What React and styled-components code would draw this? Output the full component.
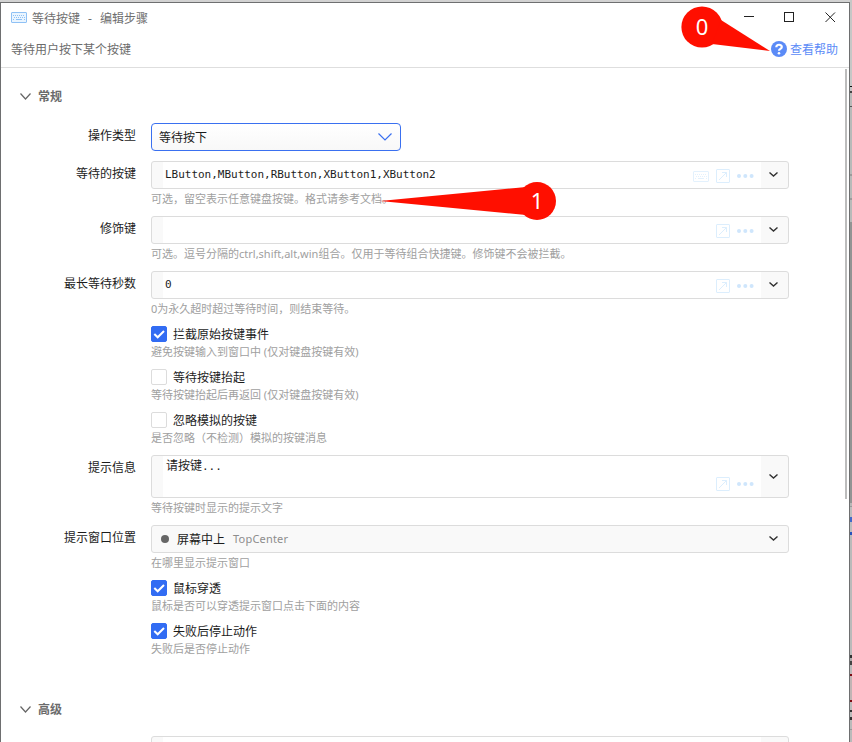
import styled, { createGlobalStyle } from "styled-components";

const GlobalStyle = createGlobalStyle`
  * {
    box-sizing: border-box;
  }

  body {
    margin: 0;
    overflow: hidden;
    background: #d2d2d2;
    color: #1c1c1c;
    font-family: "Noto Sans", "Noto Sans CJK SC", sans-serif;
    font-size: 12px;
  }
`;

const Desktop = styled.div`
  position: relative;
  display: flex;
  width: 852px;
  height: 742px;
  overflow: hidden;
`;

const Window = styled.div`
  display: flex;
  flex-direction: column;
  width: 850px;
  height: 740px;
  margin-top: 2px;
  border: 1px solid #6e6f70;
  border-bottom: 0;
  background: #fff;
`;

const Behind = styled.div`
  display: flex;
  flex-direction: column;
  width: 2px;
`;

const Slice = styled.div`
  flex: none;
  height: ${(p) => p.$h}px;
  background: ${(p) => p.$color};
`;

const TitleBar = styled.header`
  display: flex;
  align-items: center;
  height: 29px;
  padding: 0 13px 0 10px;
  color: #6f6f6f;
`;

const Title = styled.span`
  flex: 1;
  margin-left: 5px;
  white-space: pre;
  word-spacing: 0.9px;
`;

const WindowButtons = styled.div`
  display: flex;
  gap: 30px;

  svg {
    display: block;
  }
`;

const SubBar = styled.div`
  display: flex;
  align-items: center;
  justify-content: space-between;
  height: 36px;
  padding: 0 11px 2px 10px;
  border-bottom: 1px solid #dedede;
  color: #6b6b6b;
`;

const HelpLink = styled.a`
  display: flex;
  align-items: center;
  gap: 3px;
  color: #5b8bf7;
`;

const Content = styled.main`
  display: flex;
  flex: 1;
  min-height: 0;
`;

const Form = styled.div`
  flex: 1;
  overflow: hidden;
`;

const ScrollThumb = styled.div`
  width: 2px;
  height: 430px;
  margin: 1px 2px 0 0;
  background: #bcbcbc;
`;

const SectionTitle = styled.div`
  display: flex;
  align-items: center;
  gap: 7px;
  height: 20px;
  margin: ${(p) => p.$top}px 0 17px 19px;
  color: #6b6b6b;
  font-weight: 700;
`;

const Row = styled.div`
  display: grid;
  grid-template-columns: 135px 638px;
  column-gap: 15px;
  margin-bottom: ${(p) => p.$gap ?? 7}px;
`;

const Label = styled.label`
  height: 16px;
  line-height: 26px;
  text-align: right;
`;

const Hint = styled.div`
  height: 20px;
  color: #a0a0a0;
  font-size: 11px;
  line-height: 20px;
  white-space: nowrap;
`;

const Select = styled.div`
  display: flex;
  align-items: center;
  justify-content: space-between;
  width: 250px;
  height: 28px;
  padding: 0 8px 1px 7px;
  border: 1px solid #3a70f0;
  border-radius: 4px;
  background: linear-gradient(#fff, #f8f8f8);
`;

const Field = styled.div`
  display: flex;
  height: ${(p) => p.$h ?? 28}px;
  overflow: hidden;
  border: 1px solid #dcdcdc;
  border-radius: 3px;
  background: #f9f9f9;
`;

const FieldBody = styled.div`
  display: flex;
  flex: 1;
  justify-content: space-between;
  margin-left: 11px;
  padding-left: ${(p) => (p.$multi ? 3 : 2)}px;
  background: #fff;
`;

const Value = styled.span`
  font-family: "DejaVu Sans Mono", "Noto Sans CJK SC", monospace;
  font-size: 11px;
  letter-spacing: -0.02px;
  line-height: ${(p) => (p.$multi ? 20 : 25)}px;
`;

const Big = styled.span`
  font-size: 12px;
`;

const Tools = styled.div`
  display: flex;
  align-items: center;
  align-self: flex-end;
  gap: 7px;
  height: ${(p) => (p.$multi ? 26 : 24)}px;
  margin-right: 7px;
`;

const DropCell = styled.div`
  display: flex;
  align-items: center;
  justify-content: center;
  width: 27px;
  padding: 0 2px 1px 0;
`;

const Choice = styled.div`
  display: flex;
  flex: 1;
  align-items: center;
  padding-left: 9px;
`;

const Dot = styled.span`
  width: 8px;
  height: 8px;
  margin-right: 8px;
  border-radius: 50%;
  background: #666;
`;

const ChoiceNote = styled.span`
  margin: 0 0 1px 8px;
  color: #8d8d8d;
  font-size: 11px;
  letter-spacing: 0.2px;
`;

const CheckLine = styled.div`
  display: flex;
  align-items: center;
  gap: 6px;
  height: 16px;
`;

const CheckBox = styled.span`
  display: flex;
  width: 16px;
  height: 16px;
  border: 1px solid ${(p) => (p.$on ? "#326cf3" : "#dcdcdc")};
  border-radius: 2px;
  background: ${(p) => (p.$on ? "#326cf3" : "#fff")};
`;

const Markers = styled.svg`
  position: absolute;
  top: 0;
  left: 0;
  pointer-events: none;
`;

// what shows of the window behind, top to bottom
const slices = [
  [86, "#c6c7c6"], [1, "#111"], [4, "#c4c4c4"], [2, "#444"], [13, "#b9bab9"],
  [1, "#555"], [67, "#b8bab9"], [2, "#9b9b9b"], [22, "#b8bab9"], [2, "#9b9b9b"],
  [22, "#b8bab9"], [281, "#929493"], [3, "#b7b7b7"], [1, "#999"], [10, "#bdbdbd"],
  [5, "#4269c8"], [10, "#bdbdbd"], [3, "#2852bb"], [120, "#bababa"], [3, "#333"],
  [3, "#aaa"], [4, "#444"], [9, "#bababa"], [2, "#7c0b12"], [24, "#c0b4b4"],
  [2, "#7c0b12"], [8, "#bababa"], [2, "#333"], [5, "#bababa"], [3, "#333"],
  [9, "#bababa"], [1, "#999"], [12, "#bababa"],
];

const KeyboardIcon = ({ color, fill = "none" }) => (
  <svg width="16" height="11" viewBox="0 0 16 11" fill="none" stroke={color}>
    <rect x="0.5" y="0.5" width="15" height="10" rx="0.5" fill={fill} />
    <path d="M2 3.5h12M3 5.5h11" strokeDasharray="1 1" />
    <path d="M2 7.5h1M5 7.5h6M13 7.5h1" />
  </svg>
);

const OpenIcon = () => (
  <svg width="14" height="14" viewBox="0 0 14 14" fill="none" stroke="#dceefd">
    <rect x="0.5" y="0.5" width="13" height="13" rx="0.5" />
    <path d="M3 11L10.5 3.5M6 3.5h4.5V8" />
  </svg>
);

const MoreIcon = () => (
  <svg width="17" height="4" viewBox="0 0 17 4" fill="#cfe6fc">
    <circle cx="2" cy="2" r="2" />
    <circle cx="8.3" cy="2" r="2" />
    <circle cx="14.6" cy="2" r="2" />
  </svg>
);

const Chevron = ({ w, h, color, stroke = 1.2 }) => (
  <svg width={w} height={h} fill="none" stroke={color} strokeWidth={stroke}>
    <path d={`M0.5 0.5L${w / 2} ${h - 1}L${w - 0.5} 0.5`} />
  </svg>
);

const DropArrow = () => (
  <DropCell>
    <Chevron w={9} h={5} color="#333" stroke={1.4} />
  </DropCell>
);

const TextField = ({ children, keyboard, multi }) => (
  <Field $h={multi ? 43 : 28}>
    <FieldBody $multi={multi}>
      <Value $multi={multi}>{children}</Value>
      <Tools $multi={multi}>
        {keyboard && <KeyboardIcon color="#e3f1fd" />}
        <OpenIcon />
        <MoreIcon />
      </Tools>
    </FieldBody>
    <DropArrow />
  </Field>
);

const FormRow = ({ label, hint, gap, children }) => (
  <Row $gap={gap}>
    <Label>{label}</Label>
    <div>
      {children}
      {hint && <Hint>{hint}</Hint>}
    </div>
  </Row>
);

const CheckRow = ({ text, hint, checked }) => (
  <FormRow hint={hint}>
    <CheckLine>
      <CheckBox $on={checked}>
        {checked && (
          <svg width="14" height="14" fill="none" stroke="#fff" strokeWidth="2">
            <path d="M2.3 7L5.7 10.3L12 4" />
          </svg>
        )}
      </CheckBox>
      {text}
    </CheckLine>
  </FormRow>
);

const Section = ({ top, children }) => (
  <SectionTitle $top={top}>
    <Chevron w={11} h={7} color="#666" />
    {children}
  </SectionTitle>
);

const App = () => {
  return (
    <Desktop>
      <GlobalStyle />
      <Window>
        <TitleBar>
          <KeyboardIcon color="#8fc1f5" fill="#eaf5ff" />
          <Title>等待按键  -  编辑步骤</Title>
          <WindowButtons>
            <svg width="11" height="11" stroke="#222"><path d="M1 4.5h10" /></svg>
            <svg width="11" height="11" fill="none" stroke="#222"><rect x="0.5" y="0.5" width="9" height="9" /></svg>
            <svg width="11" height="11" stroke="#222"><path d="M0.5 0.5l9.5 9.5M10 0.5L0.5 10" /></svg>
          </WindowButtons>
        </TitleBar>
        <SubBar>
          <span>等待用户按下某个按键</span>
          <HelpLink>
            <svg width="16" height="16" viewBox="0 0 16 16" fill="none">
              <circle cx="8" cy="8" r="8" fill="#5b8bf7" />
              <path d="M5.3 6.2C5.4 3 10.8 3 10.8 6C10.8 8 8 7.8 8 9.8" stroke="#fff" strokeWidth="2.2" />
              <circle cx="8" cy="12.2" r="1.3" fill="#fff" />
            </svg>
            查看帮助
          </HelpLink>
        </SubBar>
        <Content>
          <Form>
            <Section top={18}>常规</Section>
            <FormRow label="操作类型" gap={10}>
              <Select>
                等待按下
                <Chevron w={14} h={8} color="#3a70f0" />
              </Select>
            </FormRow>
            <FormRow label="等待的按键" hint="可选，留空表示任意键盘按键。格式请参考文档。">
              <TextField keyboard>LButton,MButton,RButton,XButton1,XButton2</TextField>
            </FormRow>
            <FormRow label="修饰键" hint="可选。逗号分隔的ctrl,shift,alt,win组合。仅用于等待组合快捷键。修饰键不会被拦截。">
              <TextField />
            </FormRow>
            <FormRow label="最长等待秒数" hint="0为永久超时超过等待时间，则结束等待。">
              <TextField>0</TextField>
            </FormRow>
            <CheckRow checked text="拦截原始按键事件" hint="避免按键输入到窗口中 (仅对键盘按键有效)" />
            <CheckRow text="等待按键抬起" hint="等待按键抬起后再返回 (仅对键盘按键有效)" />
            <CheckRow text="忽略模拟的按键" hint="是否忽略（不检测）模拟的按键消息" />
            <FormRow label="提示信息" hint="等待按键时显示的提示文字">
              <TextField multi><Big>请按键</Big>...</TextField>
            </FormRow>
            <FormRow label="提示窗口位置" hint="在哪里显示提示窗口">
              <Field>
                <Choice>
                  <Dot />
                  屏幕中上
                  <ChoiceNote>TopCenter</ChoiceNote>
                </Choice>
                <DropArrow />
              </Field>
            </FormRow>
            <CheckRow checked text="鼠标穿透" hint="鼠标是否可以穿透提示窗口点击下面的内容" />
            <CheckRow checked text="失败后停止动作" hint="失败后是否停止动作" />
            <Section top={40}>高级</Section>
            <FormRow>
              <TextField />
            </FormRow>
          </Form>
          <ScrollThumb />
        </Content>
      </Window>
      <Behind>
        {slices.map(([h, color], i) => (
          <Slice key={i} $h={h} $color={color} />
        ))}
      </Behind>
      <Markers width="852" height="742" fill="#ff0f00">
        <circle cx="702" cy="27" r="20.6" />
        <path d="M721 20L770 51L712 44Z" />
        <circle cx="537" cy="201" r="19" />
        <path d="M380 201L526 187L526 215Z" />
        <g fill="#fff" fontSize="22" fontFamily="Noto Sans" textAnchor="middle">
          <text x="702" y="35">0</text>
          <text x="537" y="209">1</text>
        </g>
      </Markers>
    </Desktop>
  );
};

export default App;
